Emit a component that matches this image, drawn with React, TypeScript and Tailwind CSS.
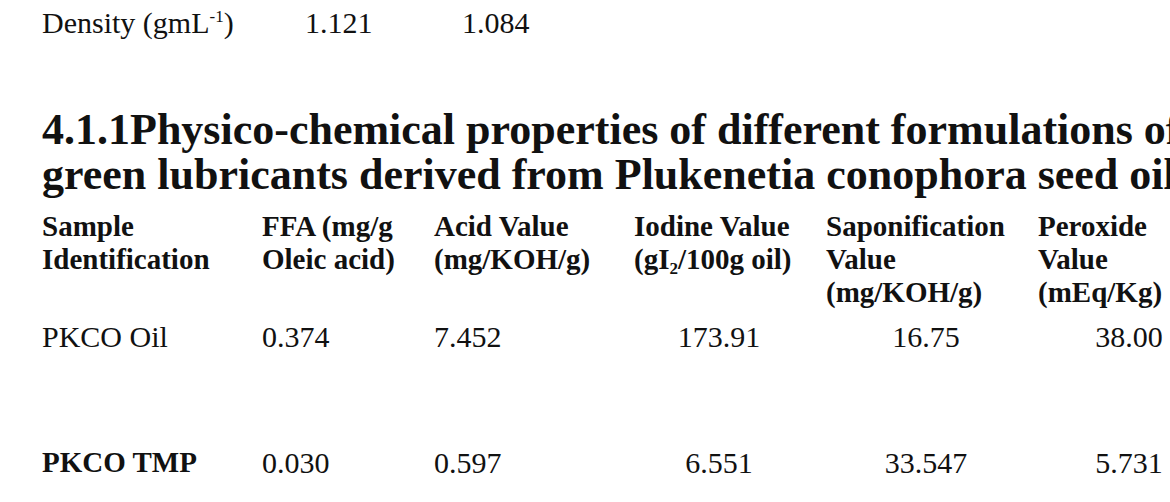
import React from 'react';

type Row = {
  label: string;
  bold?: boolean;
  ffa: string;
  acid: string;
  iodine: string;
  sapon: string;
  peroxide: string;
};

const rows: Row[] = [
  { label: 'PKCO Oil', ffa: '0.374', acid: '7.452', iodine: '173.91', sapon: '16.75', peroxide: '38.00' },
  { label: 'PKCO TMP', bold: true, ffa: '0.030', acid: '0.597', iodine: '6.551', sapon: '33.547', peroxide: '5.731' },
];

const gridCols = 'grid grid-cols-[220px_172px_200px_192px_212px_200px]';

export default function App() {
  return (
    <div className="w-[1170px] h-[502px] overflow-hidden bg-white text-[#111] font-['Liberation_Serif','Times_New_Roman',serif]">
      {/* Density row */}
      <div className="flex pl-[42px] pt-[8px] text-[30px] leading-[30px] whitespace-nowrap">
        <span className="w-[263px]">
          Density (gmL<sup className="text-[17px] relative -top-[11px]">-1</sup>)
        </span>
        <span className="w-[157px]">1.121</span>
        <span>1.084</span>
      </div>

      {/* Section heading */}
      <h2 className="mt-[69px] pl-[42px] text-[44px] leading-[45px] font-bold whitespace-nowrap">
        <span className="block">4.1.1Physico-chemical properties of different formulations of</span>
        <span className="block">green lubricants derived from Plukenetia conophora seed oil</span>
      </h2>

      {/* Table */}
      <div className="mt-[13px] pl-[42px] text-[29px] whitespace-nowrap">
        <div className={`${gridCols} font-bold leading-[33px]`}>
          <div>
            <span className="block">Sample</span>
            <span className="block">Identification</span>
          </div>
          <div>
            <span className="block">FFA (mg/g</span>
            <span className="block">Oleic acid)</span>
          </div>
          <div>
            <span className="block">Acid Value</span>
            <span className="block">(mg/KOH/g)</span>
          </div>
          <div>
            <span className="block">Iodine Value</span>
            <span className="block">
              (gI<sub className="text-[17px] relative top-[5px]">2</sub>/100g oil)
            </span>
          </div>
          <div>
            <span className="block">Saponification</span>
            <span className="block">Value</span>
            <span className="block">(mg/KOH/g)</span>
          </div>
          <div>
            <span className="block">Peroxide</span>
            <span className="block">Value</span>
            <span className="block">(mEq/Kg)</span>
          </div>
        </div>

        <div className="flex flex-col gap-[93px] mt-[11px] text-[30px]">
          {rows.map((r) => (
            <div key={r.label} className={`${gridCols} leading-[33px]`}>
              <div className={r.bold ? 'font-bold text-[29px]' : ''}>{r.label}</div>
              <div>{r.ffa}</div>
              <div>{r.acid}</div>
              <div className="text-center pr-[22px]">{r.iodine}</div>
              <div className="text-center pr-[12px]">{r.sapon}</div>
              <div className="text-center pr-[18px]">{r.peroxide}</div>
            </div>
          ))}
        </div>
      </div>
    </div>
  );
}
